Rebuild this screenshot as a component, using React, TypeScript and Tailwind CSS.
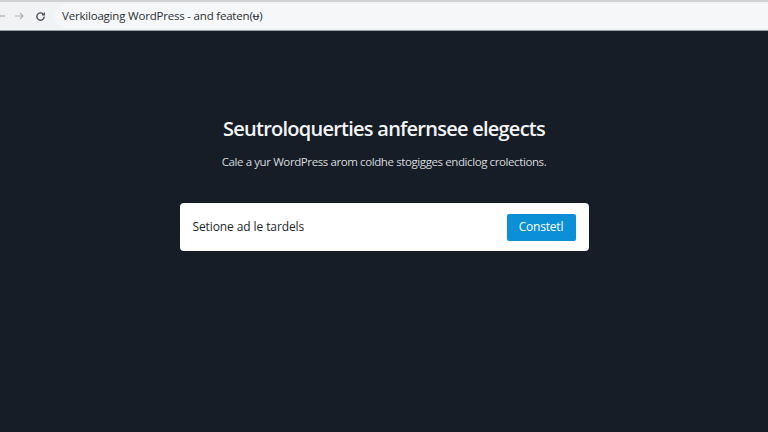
import React from "react";

export default function App() {
  return (
    <div className="w-[768px] h-[432px] overflow-hidden bg-[#161d26] flex flex-col" style={{ fontFamily: "'Open Sans', 'Noto Sans', sans-serif" }}>
      <div className="h-[31px] bg-[#f1f2f4] border-t-2 border-[#cfd1d4] border-b border-b-[#9aa0a6] flex items-center shrink-0">
        <div className="w-[55px] flex items-center shrink-0 text-[#8a8f95]">
          <svg width="10" height="10" viewBox="0 0 10 10" className="ml-[-4px]"><path d="M9 5H1M4 2L1 5l3 3" stroke="#9aa0a6" strokeWidth="1.2" fill="none"/></svg>
          <svg width="10" height="10" viewBox="0 0 10 10" className="ml-[8px]"><path d="M1 5h8M6 2l3 3-3 3" stroke="#b0b4b9" strokeWidth="1.2" fill="none"/></svg>
          <svg width="11" height="11" viewBox="0 0 12 12" className="ml-[11px]"><path d="M10 6a4 4 0 1 1-1.2-2.8" stroke="#4b5056" strokeWidth="1.5" fill="none"/><path d="M10.2 1.5v2.6H7.6" stroke="#4b5056" strokeWidth="1.4" fill="none"/></svg>
        </div>
        <div className="flex-1 h-[24px] bg-[#f6f7f9] rounded-l-full flex items-center pl-[7px] text-[11.5px] text-[#2b2f33] tracking-[-0.2px]">
          Verkiloaging WordPress - and featen(ᵾ)
        </div>
      </div>
      <div className="flex flex-col items-center pt-[86px]">
        <h1 className="text-[20px] font-semibold text-[#f3f4f6] leading-[24px] tracking-[-0.75px]">Seutroloquerties anfernsee elegects</h1>
        <p className="mt-[13px] text-[11.5px] text-[#d7dadf] leading-[16px] tracking-[-0.4px]">Cale a yur WordPress arom coldhe stogigges endiclog crolections.</p>
        <div className="mt-[33px] w-[409px] h-[48px] bg-white rounded-[4px] flex items-center justify-between pl-[13px] pr-[13px]">
          <span className="text-[12px] text-[#22262a] tracking-[-0.1px]">Setione ad le tardels</span>
          <button className="w-[69px] h-[27px] bg-[#0b8fd6] rounded-[2px] text-white text-[12px] font-medium flex items-center justify-center tracking-[-0.2px]">Constetl</button>
        </div>
      </div>
    </div>
  );
}
